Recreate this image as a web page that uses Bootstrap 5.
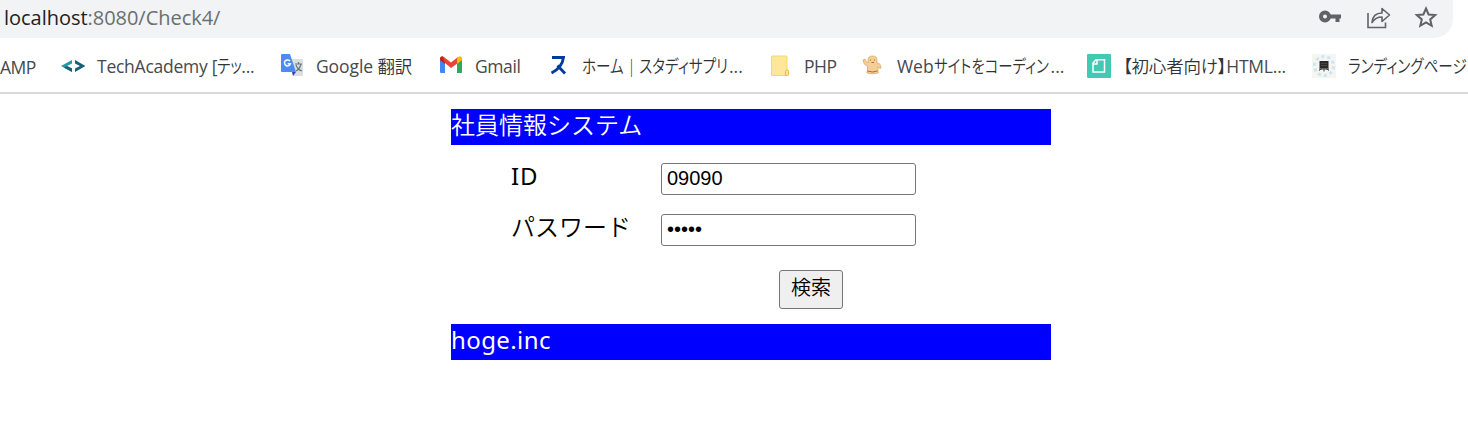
<!DOCTYPE html>
<html lang="ja">
<head>
<meta charset="utf-8">
<meta name="viewport" content="width=device-width, initial-scale=1">
<title>社員情報システム</title>
<link rel="stylesheet" href="https://cdn.jsdelivr.net/npm/bootstrap@5.3.0/dist/css/bootstrap.min.css">
<style>
body{font-family:"Noto Sans","Noto Sans CJK JP",sans-serif;color:#000;height:428px;line-height:36px;font-size:24px}
.address{width:1453px;height:38px;background:#f1f3f4;border-bottom-right-radius:19px;font:20px/36px "Open Sans",sans-serif;color:#6b6e71;padding:0 15px 0 4px}
.address b{font-weight:400;color:#202124}
.url{letter-spacing:-.03px}
.bookmarks{height:56px;padding-top:1px;border-bottom:2px solid #dadada;gap:24px;font:17.5px/56px "Open Sans","Noto Sans CJK JP",sans-serif;color:#45494d;font-feature-settings:"palt"}
.bm{gap:12px}
.bm svg{width:24px;height:24px;flex:none}
.bm-text{width:var(--w);letter-spacing:var(--s,0);white-space:nowrap}
.jp-light{font-weight:350;color:#2f3337}
.kana{display:inline-block;width:var(--k);font-size:18px;font-weight:350;color:#2f3337;letter-spacing:0;transform:scaleX(var(--x,.81));transform-origin:left}
.page{width:600px;margin:15px 0 0 451px}
.bar{height:36px;background:#00f;color:#fff;line-height:31px}
.kanji{font-weight:350}
.line{height:32px;padding-left:60px}
.line label{width:150px;line-height:25px;white-space:nowrap}
.field{width:255px;height:32px;border:1px solid #767676;border-radius:3px;padding:0 5px 2px;font:20px "Liberation Sans",sans-serif;color:#000;background:#fff}
.send{width:64px;height:39px;border:1px solid #767676;border-radius:3px;background:#efefef;font-size:20px;line-height:33px;padding:0 0 4px;color:#000;margin-left:328px}
</style>
</head>
<body class="m-0 bg-white overflow-hidden">
<header>
<div class="address d-flex justify-content-between">
<div class="url"><b>localhost</b>:8080/Check4/</div>
<svg width="124" height="36" viewBox="1314 0 124 36" fill="none" stroke="#5f6368">
<circle cx="1325" cy="16.500" r="4" stroke-width="4"/><path d="M1330 16.500h11M1337.500 17v5" stroke-width="4"/>
<path d="M1368 13v14.500h17.500v-5" stroke-width="1.600"/><path d="M1372 22.500c.5-7 4-9.500 10-9.500V8.500l7.500 6.500-7.500 6.500v-4.500c-5 0-7.500 1.500-10 5.500z" stroke-width="1.600" stroke-linejoin="round"/>
<path d="M1426 8.500l2.600 6 6.600.6-5 4.300 1.500 6.400-5.700-3.400-5.700 3.400 1.500-6.400-5-4.300 6.600-.6z" stroke-width="2"/>
</svg>
</div>
<nav class="bookmarks d-flex overflow-hidden">
<div class="bm-text" style="--w:37px;--s:-.5px">AMP</div>
<div class="bm d-flex align-items-center"><svg viewBox="0 0 24 24"><path d="M11 6L0 12l11 6v-3.500l-5-2.500 5-2.500z" fill="#2a94a7"/><path d="M11 14.500V18L3 13.500l3-1.500z" fill="#17627a"/><path d="M14 6l10.500 6L14 18v-3.500l5-2.500-5-2.500z" fill="#176078"/></svg><span class="bm-text" style="--w:159px;--s:-.25px">TechAcademy [<span class="kana" style="--k:24px">テッ</span>...</span></div>
<div class="bm d-flex align-items-center"><svg viewBox="0 0 24 24"><path d="M9 5h13q1 0 1 1v15q0 1-1 1H13z" fill="#dcdfe0"/><path d="M2 0h8l6 18H2q-1 0-1-1V1q0-1 1-1z" fill="#4c8bf5"/><path d="M12 18h4l-3 4z" fill="#3740b5"/><path d="M10 7.200a3 3 0 1 0 .4 2.500H7.700" fill="none" stroke="#fff" stroke-width="1.500"/><path d="M15 10h7M18.500 8v2M21 10c-1 4-3 6-5 7m0-6c1 3 3 5 6 6" fill="none" stroke="#66777c" stroke-width="1.200"/></svg><span class="bm-text" style="--w:99px;--s:-.1px">Google <span class="jp-light">翻訳</span></span></div>
<div class="bm d-flex align-items-center"><svg viewBox="0 0 24 24"><path d="M1 5l5 4v10H2q-1 0-1-1z" fill="#4285f4"/><path d="M18 9l5-4v13q0 1-1 1h-4z" fill="#34a853"/><path d="M1 6V4q1-3 4-1l7 5.500L19 3v6l-7 5-6-5v1z" fill="#ea4335"/><path d="M1 6V4q1-2 3-1.500L6 9v1z" fill="#c5221f"/><path d="M18 4l1-1q3-2 4 1v2l-5 4z" fill="#fbbc04"/></svg><span class="bm-text" style="--w:47px;--s:-.4px">Gmail</span></div>
<div class="bm d-flex align-items-center"><svg viewBox="0 0 24 24"><path d="M6 3.500h11.500c-1 7-5 12-12 15.500M11.500 11.500L19 19.500" fill="none" stroke="#003b9c" stroke-width="2.800"/></svg><span class="bm-text" style="--w:162px"><span class="kana" style="--k:147px">ホーム | スタディサプリ</span>...</span></div>
<div class="bm d-flex align-items-center"><svg viewBox="0 0 24 24"><path d="M4 2h14q1 0 1 1v18.500H3.500V3q0-1 .5-1z" fill="#ffe69a" stroke="#f4d66c"/><path d="M17.500 21.500v-4q0-1.500 1.500-1.500h.5q1 0 1 1.500v3q0 1-1 1z" fill="#ffe793" stroke="#e5bd38"/></svg><span class="bm-text" style="--w:33px;--s:-.5px">PHP</span></div>
<div class="bm d-flex align-items-center"><svg viewBox="0 0 24 24"><path d="M7 9V6q0-4 4.500-4T16 6v3q4 0 4 5l-1 .5q-1.500-.5-2-2v5q1 1 0 1.500-6 1.500-11 0-.5-1 .5-2v-4.500Q2 10 2 6l2-1q1 3 3 4z" fill="#f5ce96" stroke="#dfa967" stroke-width=".8"/><path d="M9.500 5.500v1m4-1v1m-3 2h2.500M6.500 17q5 2 10 0" fill="none" stroke="#a17043"/></svg><span class="bm-text" style="--w:166px;--s:-.04px">Web<span class="kana" style="--k:117px;--x:.8">サイトをコーディン</span>...</span></div>
<div class="bm d-flex align-items-center"><svg viewBox="0 0 24 24"><rect width="24" height="24" rx="1" fill="#40c9b3"/><path d="M9 5.700h8.500V18H6V9zM10 6v4H6.500" fill="none" stroke="#fff" stroke-width="1.500"/></svg><span class="bm-text" style="--w:165px;--s:-.2px"><span class="jp-light">【初心者向け】</span>HTML...</span></div>
<div class="bm d-flex align-items-center"><svg viewBox="0 0 24 24"><path d="M0 0h24v24H0z" fill="#f5f6ef"/><circle cx="12" cy="12" r="9.500" fill="none" stroke="#cce5fb" stroke-width="3" stroke-dasharray="3.200 2.770"/><path d="M7.500 7h9v7.500h-9z" fill="#292b2b"/><path d="M7 16.500l3-2m2 3v-3m5 2l-3-2M7 15h10M9 9.500h6m-6 2h6" stroke="#444" fill="none"/></svg><span class="bm-text" style="--w:120px"><span class="kana" style="--k:119px">ランディングページ</span></span></div>
</nav>
</header>
<main class="page">
<div class="bar kanji">社員情報システム</div>
<form>
<div class="line d-flex" style="margin-top:18px"><label for="uid" style="letter-spacing:.9px">ID</label><input id="uid" class="field" type="text" value="09090"></div>
<div class="line d-flex" style="margin-top:19px"><label for="pw" class="kanji">パスワード</label><input id="pw" class="field" type="password" value="09090"></div>
<div class="d-flex" style="margin:24px 0 15px"><button class="send kanji" type="button">検索</button></div>
</form>
<div class="bar" style="letter-spacing:.4px">hoge.inc</div>
</main>
<script src="https://cdn.jsdelivr.net/npm/bootstrap@5.3.0/dist/js/bootstrap.bundle.min.js"></script>
</body>
</html>
